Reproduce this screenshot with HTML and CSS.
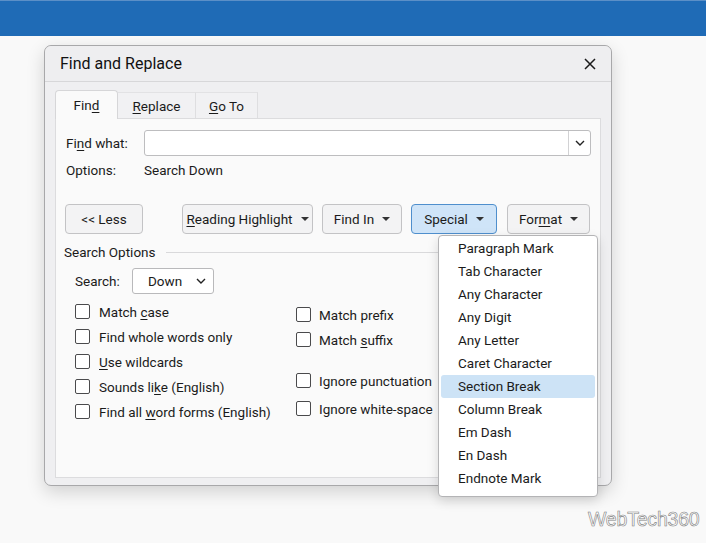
FILE: index.html
```html
<!DOCTYPE html>
<html lang="en">
<head>
  <meta charset="UTF-8">
  <title>Find and Replace</title>
  <link rel="stylesheet" href="styles.css">
</head>
<body>
  <div class="topbar"></div>
  <div class="stage">
    <div class="dialog">
      <div class="titlebar">
        <span class="title">Find and Replace</span>
        <svg class="close" width="12" height="12" viewBox="0 0 12 12">
          <path d="M1 1L11 11M11 1L1 11" stroke="#1a1a1a" stroke-width="1.5" fill="none"/>
        </svg>
      </div>
      <div class="dlg-body">
        <div class="tabs">
          <div class="tab active"><span>Fin<u>d</u></span></div>
          <div class="tab"><span><u>R</u>eplace</span></div>
          <div class="tab"><span><u>G</u>o To</span></div>
        </div>
        <div class="panel">
          <div class="row">
            <span class="label">Fi<u>n</u>d what:</span>
            <div class="combo">
              <div class="combo-text"></div>
              <div class="combo-btn">
                <svg width="10" height="6" viewBox="0 0 10 6"><path d="M1 1L5 5L9 1" stroke="#222" stroke-width="1.4" fill="none"/></svg>
              </div>
            </div>
          </div>
          <div class="row options">
            <span class="label">Options:</span>
            <span>Search Down</span>
          </div>
          <div class="buttons">
            <div class="btn less"><span>&lt;&lt; Less</span></div>
            <div class="btn reading"><span><u>R</u>eading Highlight</span><i class="caret"></i></div>
            <div class="btn findin"><span>Find In</span><i class="caret"></i></div>
            <div class="special-wrap">
              <div class="btn special"><span>Special</span><i class="caret"></i></div>
              <div class="menu">
                <div class="item">Paragraph Mark</div>
                <div class="item">Tab Character</div>
                <div class="item">Any Character</div>
                <div class="item">Any Digit</div>
                <div class="item">Any Letter</div>
                <div class="item">Caret Character</div>
                <div class="item selected">Section Break</div>
                <div class="item">Column Break</div>
                <div class="item">Em Dash</div>
                <div class="item">En Dash</div>
                <div class="item">Endnote Mark</div>
              </div>
            </div>
            <div class="btn format"><span>For<u>m</u>at</span><i class="caret"></i></div>
          </div>
          <div class="group-head">
            <span>Search Options</span>
            <div class="rule"></div>
          </div>
          <div class="search-row">
            <span class="search-label">Search:</span>
            <div class="select">
              <span>Down</span>
              <svg width="10" height="6" viewBox="0 0 10 6"><path d="M1 1L5 5L9 1" stroke="#222" stroke-width="1.4" fill="none"/></svg>
            </div>
          </div>
          <div class="checks">
            <div class="col left">
              <div class="check"><i class="box"></i><span>Match <u>c</u>ase</span></div>
              <div class="check"><i class="box"></i><span>Find whole words only</span></div>
              <div class="check"><i class="box"></i><span><u>U</u>se wildcards</span></div>
              <div class="check"><i class="box"></i><span>Sounds li<u>k</u>e (English)</span></div>
              <div class="check"><i class="box"></i><span>Find all <u>w</u>ord forms (English)</span></div>
            </div>
            <div class="col right">
              <div class="check"><i class="box"></i><span>Match prefix</span></div>
              <div class="check"><i class="box"></i><span>Match <u>s</u>uffix</span></div>
              <div class="check gap"><i class="box"></i><span>Ignore punctuation</span></div>
              <div class="check tall"><i class="box"></i><span>Ignore white-space</span></div>
            </div>
          </div>
        </div>
      </div>
    </div>
  </div>
  <div class="watermark">WebTech360</div>
</body>
</html>
```

FILE: styles.css
```css
body {
  margin: 0;
  width: 706px;
  height: 543px;
  overflow: hidden;
  position: relative;
  background: #f9f9f9;
  font-family: 'Roboto', 'Noto Sans', Arial, sans-serif;
  font-size: 13.5px;
  color: #1b1b1b;
}
u {
  text-decoration-thickness: 1px;
  text-underline-offset: 2px;
}
.topbar {
  height: 36px;
  background: #1f6bb6;
  border-top: 1px solid #5b8fc7;
  box-sizing: border-box;
}
.stage {
  padding: 9px 0 0 44px;
}
.dialog {
  width: 568px;
  height: 441px;
  box-sizing: border-box;
  border: 1px solid #a8a8aa;
  border-radius: 7px;
  background: #efeff1;
  box-shadow: 0 6px 18px rgba(0, 0, 0, 0.16);
}
.titlebar {
  height: 36px;
  box-sizing: border-box;
  border-bottom: 1px solid #d7d7d9;
  border-radius: 7px 7px 0 0;
  display: flex;
  align-items: center;
  justify-content: space-between;
  padding: 0 15px 0 15px;
  background: #eeeef0;
}
.title {
  font-size: 16px;
  color: #111;
}
.dlg-body {
  padding: 8px 10px 0 10px;
}
.tabs {
  display: flex;
  height: 28px;
  align-items: flex-end;
}
.tab {
  height: 26px;
  display: flex;
  align-items: center;
  justify-content: center;
  box-sizing: border-box;
  border-top: 1px solid #e2e2e4;
  border-right: 1px solid #dedee0;
  background: #f1f1f3;
  padding-top: 1px;
}
.tab:nth-child(2) { width: 78px; }
.tab:nth-child(3) { width: 62px; }
.tab.active {
  width: 63px;
  height: 29px;
  background: #fafafa;
  border: 1px solid #d6d6d8;
  border-bottom: none;
  border-radius: 4px 4px 0 0;
  margin-bottom: -1px;
  position: relative;
  z-index: 1;
  padding-top: 0;
}
.panel {
  height: 360px;
  box-sizing: border-box;
  background: #fafafa;
  border: 1px solid #dcdcde;
  padding: 11px 9px 0 10px;
}
.row {
  display: flex;
  align-items: center;
  height: 26px;
}
.label {
  width: 78px;
  flex-shrink: 0;
}
.combo {
  flex: 1;
  height: 26px;
  box-sizing: border-box;
  display: flex;
  border: 1px solid #bdbdbf;
  border-radius: 3px;
  background: #fff;
}
.combo-text {
  flex: 1;
}
.combo-btn {
  width: 21px;
  border-left: 1px solid #d2d2d4;
  display: flex;
  align-items: center;
  justify-content: center;
}
.options {
  margin-top: 2px;
  height: 24px;
}
.buttons {
  display: flex;
  margin-top: 22px;
  margin-left: -1px;
  height: 30px;
}
.btn {
  height: 30px;
  box-sizing: border-box;
  border: 1px solid #c3c3c5;
  border-radius: 4px;
  background: #f3f3f4;
  display: flex;
  align-items: center;
  justify-content: center;
  gap: 8px;
}
.less { width: 78px; }
.reading { width: 131px; margin-left: 39px; }
.findin { width: 80px; margin-left: 9px; }
.special-wrap {
  position: relative;
  margin-left: 9px;
}
.special {
  width: 86px;
  background: #cfe4f8;
  border-color: #4f8fcd;
}
.format { width: 83px; margin-left: 10px; }
.caret {
  width: 0;
  height: 0;
  border-left: 4px solid transparent;
  border-right: 4px solid transparent;
  border-top: 4px solid #333;
}
.menu {
  position: absolute;
  left: 27px;
  top: 31px;
  width: 160px;
  height: 262px;
  box-sizing: border-box;
  background: #fff;
  border: 1px solid #b4b4b6;
  border-radius: 4px;
  padding: 1px 2px;
  box-shadow: 0 4px 12px rgba(0, 0, 0, 0.14);
  z-index: 5;
}
.item {
  height: 23px;
  line-height: 23px;
  padding-left: 17px;
  border-radius: 3px;
}
.item.selected {
  background: #cde3f6;
}
.group-head {
  display: flex;
  align-items: center;
  margin-top: 10px;
  margin-left: -2px;
  height: 16px;
}
.rule {
  flex: 1;
  height: 1px;
  background: #d9d9db;
  margin-left: 10px;
}
.search-row {
  display: flex;
  align-items: center;
  margin-top: 8px;
  padding-left: 9px;
  height: 26px;
}
.search-label {
  width: 57px;
}
.select {
  width: 82px;
  height: 26px;
  box-sizing: border-box;
  border: 1px solid #b9b9bb;
  border-radius: 3px;
  background: #fff;
  display: flex;
  align-items: center;
  justify-content: space-between;
  padding: 0 7px 0 15px;
}
.checks {
  display: flex;
  margin-top: 5px;
  padding-left: 9px;
}
.col.left {
  width: 221px;
}
.col.right {
  padding-top: 3px;
}
.check {
  height: 25px;
  display: flex;
  align-items: center;
}
.check.gap {
  margin-top: 16px;
}
.check.tall {
  height: 27px;
  padding-top: 2px;
}
.box {
  width: 15px;
  height: 15px;
  box-sizing: border-box;
  border: 1.5px solid #4a4a4c;
  border-radius: 2px;
  background: #fff;
  margin-right: 9px;
  flex-shrink: 0;
}
.right .box {
  margin-right: 8px;
}
.watermark {
  position: absolute;
  left: 588px;
  top: 508px;
  font-family: 'Liberation Sans', Arial, sans-serif;
  font-size: 19.5px;
  letter-spacing: -0.2px;
  color: #fff;
  -webkit-text-stroke: 0.6px #808080;
}
```
